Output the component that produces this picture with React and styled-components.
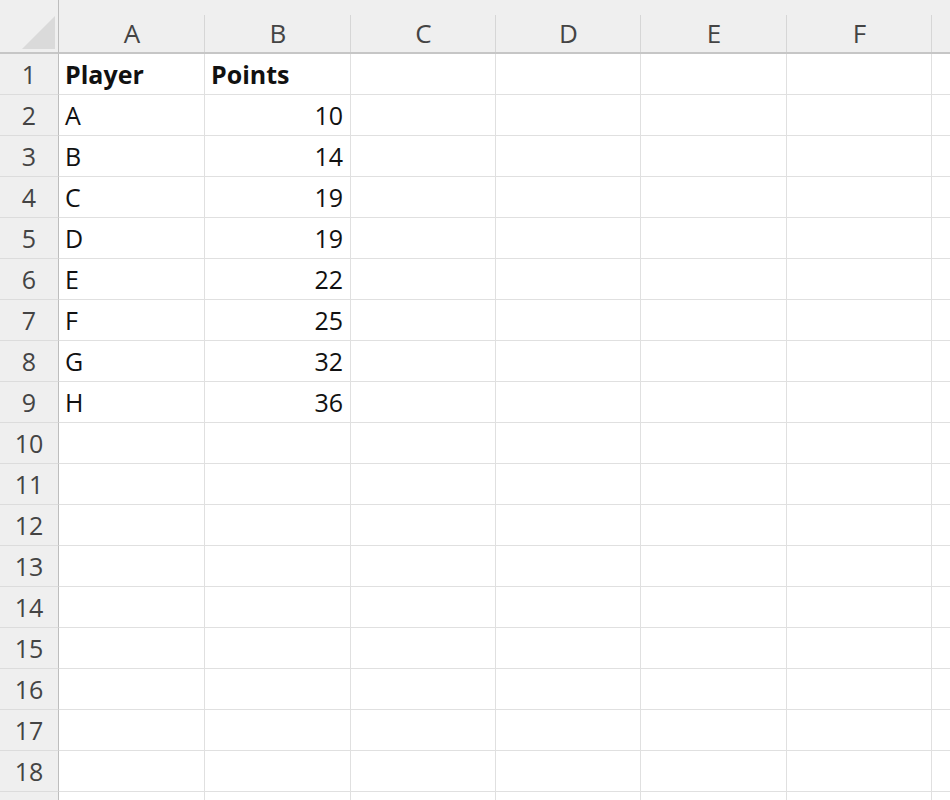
import styled, { createGlobalStyle } from "styled-components";

const GlobalStyle = createGlobalStyle`
  html, body {
    margin: 0;
    padding: 0;
    background: #ffffff;
    overflow: hidden;
  }
`;

// G is only a sliver at the right edge, so its letter is not shown
const columns = ["A", "B", "C", "D", "E", "F", ""];

const data = [
  ["Player", "Points"],
  ["A", 10],
  ["B", 14],
  ["C", 19],
  ["D", 19],
  ["E", 22],
  ["F", 25],
  ["G", 32],
  ["H", 36],
];

const Sheet = styled.div`
  width: 950px;
  height: 800px;
  overflow: hidden;
  display: grid;
  grid-template-columns: 59px 146px 146px 145px 145px 146px 145px 60px;
  grid-template-rows: 54px;
  grid-auto-rows: 41px;
  font-family: "Open Sans", "Noto Sans", sans-serif;
`;

const Corner = styled.div`
  background: #efefef;
  border-right: 1px solid #bdbdbd;
  border-bottom: 2px solid #c6c6c6;
  box-sizing: border-box;
  display: flex;
  align-items: flex-end;
  justify-content: flex-end;
  padding: 0 3px 3px 0;

  &::after {
    content: "";
    width: 33px;
    height: 33px;
    background: #dadada;
    clip-path: polygon(100% 0, 100% 100%, 0 100%);
  }
`;

const ColHeader = styled.div`
  background: #efefef;
  border-bottom: 2px solid #c6c6c6;
  box-sizing: border-box;
  position: relative;
  display: flex;
  justify-content: center;
  padding-top: 15px;
  font-size: 26px;
  line-height: 36px;
  color: #444444;

  &::after {
    content: "";
    position: absolute;
    right: 0;
    top: 15px;
    bottom: 0;
    width: 1px;
    background: #d6d6d6;
  }
`;

const RowHeader = styled.div`
  background: #efefef;
  border-right: 1px solid #bdbdbd;
  border-bottom: 1px solid #dcdcdc;
  box-sizing: border-box;
  display: flex;
  justify-content: center;
  padding-top: 1px;
  font-size: 25px;
  line-height: 39px;
  color: #444444;
`;

const Cell = styled.div`
  border-right: 1px solid #e0e0e0;
  border-bottom: 1px solid #e0e0e0;
  box-sizing: border-box;
  display: flex;
  justify-content: ${(p) => (p.$numeric ? "flex-end" : "flex-start")};
  padding: 1px 7px 0 6px;
  font-size: 25px;
  line-height: 39px;
  font-weight: ${(p) => (p.$bold ? 700 : 400)};
  color: #111111;
  white-space: nowrap;
  overflow: hidden;
`;

function App() {
  const rows = Array.from({ length: 19 }, (_, i) => i + 1);

  return (
    <>
      <GlobalStyle />
      <Sheet>
        <Corner />
        {columns.map((c, ci) => (
          <ColHeader key={`col${ci}`}>{c}</ColHeader>
        ))}

        {rows.map((r) => {
          const rowData = data[r - 1] || [];
          return [
            // row 19 only peeks in at the bottom edge
            <RowHeader key={`h${r}`}>{r < 19 ? r : ""}</RowHeader>,
            ...columns.map((c, ci) => {
              const value = rowData[ci];
              return (
                <Cell
                  key={`c${ci}r${r}`}
                  $bold={r === 1}
                  $numeric={typeof value === "number"}
                >
                  {value}
                </Cell>
              );
            }),
          ];
        })}
      </Sheet>
    </>
  );
}

export default App;
